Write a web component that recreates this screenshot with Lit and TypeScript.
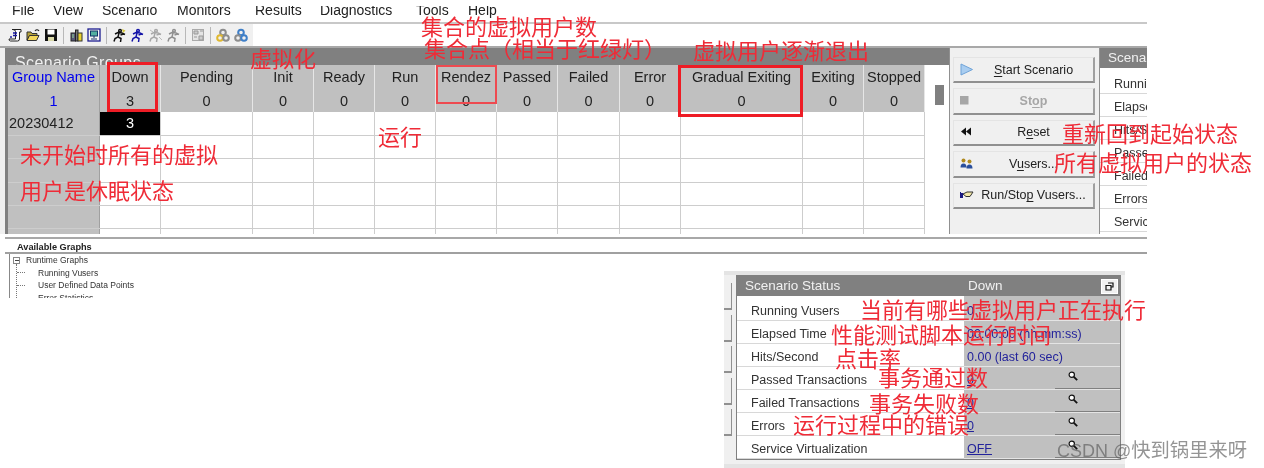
import { LitElement, html, css, svg } from "lit";
import { customElement } from "lit/decorators.js";

const MENUS = [["File",12],["View",53],["Scenario",102],["Monitors",177],["Results",255],["Diagnostics",320],["Tools",416],["Help",468]] as const;
const COLS = [
  ["Down", 61, "3"],["Pending", 92, "0"],["Init", 61, "0"],["Ready", 61, "0"],["Run", 61, "0"],["Rendez", 61, "0"],
  ["Passed", 61, "0"],["Failed", 62, "0"],["Error", 61, "0"],["Gradual Exiting", 122, "0"],["Exiting", 61, "0"],["Stopped", 61, "0"],
] as const;
const ROW_H = [24, 23, 24, 23, 23];

const runner = (c: string) => svg`<path d="M8 1.5a1.3 1.3 0 1 1 0 2.6a1.3 1.3 0 0 1 0-2.6zM3 6l3-1.5 4 .5 3 1.5M7 5l-1 4-3 1.5-1 3M6 9l3 1.5-.5 3.5M8.5 7l3-1" fill="none" stroke="${c}" stroke-width="1.5"/>`;

const ICONS = [
  svg`<path d="M4 1.5h9v2.5h-1.5v7q0 2-2 2H2.5q-1.5 0-1.5-2h6.5V3.5q0-2-3-2z" fill="#fff" stroke="#222"/><path d="M5 5h4M5 7.5h4M3 8v2" stroke="#1515a0" stroke-width="1.4"/>`,
  svg`<path d="M1 4h4l1 1.5h5v2H3.5L1 12z" fill="#b5a23c" stroke="#333"/><path d="M3.5 7.5H13l-2.5 5H1z" fill="#f3d75a" stroke="#333"/><path d="M9 3q2-2.5 4 0" fill="none" stroke="#222" stroke-width="1.2"/>`,
  svg`<rect x="1" y="1" width="12" height="12" fill="#111"/><rect x="3.5" y="1.5" width="7" height="5" fill="#fff"/><rect x="4" y="9" width="6" height="4" fill="#d8d8a8"/>`,
  svg`<rect x="2" y="5" width="4.5" height="8" fill="#557" stroke="#222"/><rect x="6.5" y="2" width="2.5" height="11" fill="#777" stroke="#222"/><rect x="9" y="5" width="4" height="8" fill="#ead22e" stroke="#333"/><path d="M3 7h2M3 9h2" stroke="#9d9"/>`,
  svg`<rect x="1" y="1" width="12" height="12" fill="#f5f5f5" stroke="#1c1c90" stroke-width="1.3"/><rect x="3.5" y="3" width="7" height="5" fill="#52b0a0" stroke="#136"/><path d="M7 8v2M4 11h6" stroke="#136"/>`,
  svg`${runner("#111")}<path d="M10 1l3.5 1.5L11 5z" fill="#d8c838"/>`,
  runner("#1616a8"),
  svg`${runner("#a8a8a8")}<path d="M2 2l3 2M11 9l3 3" stroke="#bbb"/>`,
  runner("#909090"),
  svg`<rect x="1.5" y="1.5" width="11" height="11" fill="#e4e4e4" stroke="#aaa"/><path d="M3 3h4v3H3zM8 8h4v4H8z" fill="#ccc" stroke="#999"/><path d="M9 3h3M3 9h3" stroke="#999"/>`,
  svg`<g fill="none" stroke-width="2"><circle cx="7" cy="4.5" r="2.8" stroke="#8d8d8d"/><circle cx="4" cy="10" r="2.8" stroke="#e0b830"/><circle cx="10" cy="10" r="2.8" stroke="#8d8d8d"/></g>`,
  svg`<g fill="none" stroke-width="2"><circle cx="7" cy="4.5" r="2.8" stroke="#3f7fc8"/><circle cx="4" cy="10" r="2.8" stroke="#8d8d8d"/><circle cx="10" cy="10" r="2.8" stroke="#3f7fc8"/></g>`,
];
const GROUPS = [[0,1,2],[3,4],[5,6,7,8],[9],[10,11]];

const BTN_ICONS = [
  svg`<path d="M1 1L12.5 6.5 1 12z" fill="#a9cdf0" stroke="#6fa3d8"/>`,
  svg`<rect x="0" y="2" width="8.5" height="8.5" fill="#a6a6a6"/>`,
  svg`<path d="M6 2.5v8L1 6.5zM11 2.5v8L6 6.5z" fill="#111"/>`,
  svg`<circle cx="3.5" cy="3.5" r="2" fill="#b08a20"/><circle cx="9.5" cy="4.5" r="2" fill="#b08a20"/><path d="M.5 10.5q0-4 3-4t3 4zM6.5 11.5q0-4 3-4t3 4z" fill="#2a4f9c"/>`,
  svg`<path d="M0 4v6M2 5v5" stroke="#1a1a80" stroke-width="2"/><path d="M3 6l4-2h6l-3 4.5H6z" fill="#f3e9a8" stroke="#333"/>`,
];
const LABELS = [
  ["Start Scenario",0,"S"],["Stop",2,"o"],["Reset",1,"e"],["Vusers...",1,"u"],["Run/Stop Vusers...",7,"p"],
] as const;

const STATUS: [string,string,string][] = [
  ["Running Vusers","0","plain"],["Elapsed Time","00:00:00 (hh:mm:ss)","plain"],["Hits/Second","0.00 (last 60 sec)","plain"],
  ["Passed Transactions","0","link"],["Failed Transactions","0","link"],["Errors","0","link"],["Service Virtualization","OFF","link"],
];

const NOTES: [string, number, number][] = [
  ["集合的虚拟用户数",421,25],["集合点（相当于红绿灯）",424,47],["虚拟化",250,57],["虚拟用户逐渐退出",693,49],
  ["未开始时所有的虚拟",20,153],["用户是休眠状态",20,189],["运行",378,135],
  ["重新回到起始状态",1062,132],["所有虚拟用户的状态",1054,161],
  ["当前有哪些虚拟用户正在执行",860,308],["性能测试脚本运行时间",831,333],["点击率",835,357],
  ["事务通过数",878,376],["事务失败数",869,402],["运行过程中的错误",793,423],
];

const lens = svg`<svg class="lens" width="10" height="10" viewBox="0 0 12 12"><circle cx="4.5" cy="4.5" r="3.2" fill="#fff" stroke="#111" stroke-width="1.4"/><path d="M7 7l4 4" stroke="#111" stroke-width="2.2"/></svg>`;

@customElement("app-root")
export class AppRoot extends LitElement {
  static styles = css`
    :host { display: block; position: relative; width: 1264px; height: 468px; overflow: hidden; background: #fff;
      font-family: "Liberation Sans", "DejaVu Sans", sans-serif; color: #222; filter: blur(.3px); }
    .top { width: 1147px; height: 298px; overflow: hidden; display: flex; flex-direction: column; }
    .menu { border-bottom: 2px solid #c8c8c8; flex: none; padding-top: 6px; height: 16px; }
    .menu-in { position: relative; height: 16px; overflow: hidden; }
    .menu-in span { position: absolute; top: -6px; font-size: 14px; line-height: 20px; }
    .toolbar { height: 22px; flex: none; display: flex; align-items: center; background: linear-gradient(#f0f0f0,#f0f0f0) no-repeat left / 253px 100%; padding-left: 8px; }
    .tgroup { display: flex; gap: 4px; align-items: center; padding-right: 5px; margin-right: 5px; border-right: 1px solid #b8b8b8; height: 17px; }
    .tgroup:last-child { border-right: 0; }
    .main { height: 186px; flex: none; display: flex; border-top: 2px solid #a8a8a8; background: #f0f0f0; padding-left: 5px; }
    .groups { width: 944px; box-sizing: border-box; border-left: 3px solid #808080; flex: none; display: flex; flex-direction: column; background: #fff; }
    .title { height: 17px; flex: none; background: #808080; color: #f0f0f0; font-size: 16px; line-height: 29px; padding-left: 7px; overflow: hidden; letter-spacing: .4px; }
    .sheet { display: flex; flex: 1; min-height: 0; }
    .grid { display: flex; flex-direction: column; flex: none; width: 917px; }
    .row { display: flex; box-sizing: border-box; border-bottom: 1px solid #cdcdcd; flex: none; }
    .fill { flex: 1; display: flex; }
    .cell { box-sizing: border-box; border-right: 1px solid #cdcdcd; flex: none; font-size: 14px; }
    .name { width: 92px; background: #c0c0c0; border-right: 1px solid #a0a0a0; }
    .heads { display: flex; height: 47px; flex: none; }
    .head { background: #c0c0c0; border-right: 1px solid #e6e6e6; box-sizing: border-box; text-align: center; font-size: 14.5px; display: flex; flex-direction: column; flex: none; color: #222; padding-top: 4px; }
    .head b { font-weight: 400; line-height: 17px; height: 17px; white-space: nowrap; }
    .head i { font-style: normal; line-height: 17px; margin-top: 7px; font-size: 14.5px; }
    .head.blue { color: #0000ee; border-right-color: #a0a0a0; }
    .val { font-size: 14.5px; line-height: 22px; padding-left: 1px; }
    .black { background: #000; color: #fff; text-align: center; font-size: 14.5px; line-height: 22px; }
    .scroll { width: 24px; flex: none; background: #fff; position: relative; }
    .thumb { position: absolute; left: 10px; top: 20px; width: 9px; height: 20px; background: #808080; }
    .buttons { width: 150px; flex: none; display: flex; flex-direction: column; gap: 5px; padding: 9px 4px 0 3px; box-sizing: border-box; background: #f0f0f0; border-left: 1px solid #909090; }
    .btn { height: 26.4px; flex: none; display: flex; align-items: center; box-sizing: border-box; background: #f0f0f0; border: 1px solid #e4e4e4; border-right: 2px solid #a0a0a0; border-bottom: 2px solid #909090; font-size: 12.5px; color: #222; padding-left: 6px; }
    .btn svg { flex: none; }
    .btn span { flex: 1; text-align: center; white-space: nowrap; }
    .btn span u { text-underline-offset: 2px; }
    .btn.off { color: #a6a6a6; font-weight: 700; }
    .peek { flex: 1; min-width: 0; overflow: hidden; display: flex; flex-direction: column; background: #fff; border-left: 1px solid #909090; }
    .peek-h { height: 20px; background: #808080; color: #f0f0f0; font-size: 13.5px; line-height: 20px; padding-left: 8px; white-space: nowrap; flex: none; }
    .peek-b { padding-top: 3px; }
    .peek-r { height: 23px; padding-left: 14px; font-size: 12.5px; line-height: 26px; white-space: nowrap; border-bottom: 1px solid #d8d8d8; color: #333; box-sizing: border-box; }
    .graphs { height: 62px; flex: none; border-top: 2px solid #a8a8a8; margin-top: 3px; margin-left: 5px; background: #fff; display: flex; flex-direction: column; }
    .gt { height: 13px; flex: none; font-size: 9.2px; font-weight: 700; padding-left: 12px; line-height: 16px; border-bottom: 2px solid #a0a0a0; }
    .tree { margin-left: 4px; border-left: 1px solid #888; padding: 0 0 0 3px; font-size: 8.5px; line-height: 12.6px; color: #333; position: relative; flex: 1; }
    .tree::before { content: ""; position: absolute; left: 6px; top: 10px; bottom: 0; border-left: 1px dotted #777; }
    .tree div { white-space: nowrap; }
    .minus { display: inline-block; vertical-align: middle; box-sizing: border-box; width: 7px; height: 7px; border: 1px solid #888; margin-right: 6px; background: linear-gradient(#444,#444) no-repeat center / 4px 1px; }
    .sub { padding-left: 4px; display: flex; align-items: center; }
    .sub::before { content: ""; width: 8px; border-top: 1px dotted #777; flex: none; }
    .subt { padding-left: 13px; }
    .lower { position: absolute; left: 724px; top: 271px; width: 401px; height: 197px; background: #f0f0f0; border-top: 4px solid #e4e4e4; border-bottom: 4px solid #e4e4e4; box-sizing: border-box; display: flex; }
    .stubs { width: 12px; flex: none; display: flex; flex-direction: column; gap: 4.5px; padding-top: 8px; }
    .stubs div { width: 8px; height: 27px; border-right: 1px solid #909090; border-bottom: 2px solid #909090; box-sizing: border-box; }
    .status { width: 385px; height: 185px; flex: none; box-sizing: border-box; border: 1px solid #808080; background: #fff; display: flex; flex-direction: column; }
    .status-h { height: 20px; flex: none; background: #808080; color: #f0f0f0; font-size: 13.5px; line-height: 20px; display: flex; padding: 0 2px 0 8px; }
    .status-h span:first-child { width: 223px; }
    .status-h span:nth-child(2) { flex: 1; }
    .restore { width: 17px; height: 15px; align-self: center; background: #f0f0f0; border: 1px solid #fff; box-sizing: border-box; display: flex; align-items: center; justify-content: center; }
    .sr { display: flex; height: 23px; flex: none; box-sizing: border-box; border-bottom: 1px solid #d8d8d8; }
    .sr.first { height: 25px; }
    .sr .k { width: 227px; padding-left: 14px; box-sizing: border-box; font-size: 12.5px; line-height: 26px; height: 22px; color: #333; white-space: nowrap; }
    .sr .v { flex: 1; background: #c0c0c0; font-size: 12.5px; line-height: 26px; color: #23239b; padding-left: 3px; position: relative; white-space: nowrap; border-bottom: 1px solid #e4e4e4; margin-bottom: -1px; }
    .sr.first .k, .sr.first .v { padding-top: 2px; }
    .sr .link { text-decoration: underline; }
    .lens { position: absolute; right: 42px; top: 4px; }
    .v .btnline { position: absolute; left: 91px; right: 0; bottom: 0; border-bottom: 1px solid #808080; }
    .note { position: absolute; color: #ef2b37; font-family: "Noto Sans CJK SC", sans-serif; font-size: 22px; line-height: 28px; white-space: nowrap; transform: translateY(-14px); }
    .box { position: absolute; border: 3px solid #ee1c25; box-sizing: border-box; }
    .box.thin { border: 2px solid #ee4a50; }
    .mark { position: absolute; left: 1057px; top: 436px; font-family: "Noto Sans CJK SC", sans-serif; font-size: 19.3px; line-height: 26px; color: rgba(90,90,90,.65); white-space: nowrap; }
    .mark span { font-family: "Liberation Sans", sans-serif; font-size: 18px; }
  `;

  render() {
    return html`
      <div class="top">
        <div class="menu"><div class="menu-in">${MENUS.map(([t, x]) => html`<span style="left:${x}px">${t}</span>`)}</div></div>
        <div class="toolbar">
          ${GROUPS.map(g => html`<div class="tgroup">${g.map(i => html`<svg width="14" height="14" viewBox="0 0 14 14">${ICONS[i]}</svg>`)}</div>`)}
        </div>
        <div class="main">
          <div class="groups">
            <div class="title">Scenario Groups</div>
            <div class="sheet">
              <div class="grid">
                <div class="heads">
                  <div class="head blue" style="width:92px"><b>Group Name</b><i>1</i></div>
                  ${COLS.map(([t, w, v]) => html`<div class="head" style="width:${w}px"><b>${t}</b><i>${v}</i></div>`)}
                </div>
                ${ROW_H.map((h, r) => html`<div class="row" style="height:${h}px">
                  <div class="cell name ${r === 0 ? "val" : ""}">${r === 0 ? "20230412" : ""}</div>
                  ${COLS.map(([, w], c) => html`<div class="cell ${r === 0 && c === 0 ? "black" : ""}" style="width:${w}px">${r === 0 && c === 0 ? "3" : ""}</div>`)}
                </div>`)}
                <div class="fill">
                  <div class="cell name"></div>
                  ${COLS.map(([, w]) => html`<div class="cell" style="width:${w}px"></div>`)}
                </div>
              </div>
              <div class="scroll"><div class="thumb"></div></div>
            </div>
          </div>
          <div class="buttons">
            ${LABELS.map(([t, idx, ch], i) => html`<div class="btn ${i === 1 ? "off" : ""}">
              <svg width="14" height="14" viewBox="0 0 14 14">${BTN_ICONS[i]}</svg>
              <span>${t.slice(0, idx)}<u>${ch}</u>${t.slice(idx + 1)}</span>
            </div>`)}
          </div>
          <div class="peek">
            <div class="peek-h">Scenario Status</div>
            <div class="peek-b">${STATUS.map(([k]) => html`<div class="peek-r">${k}</div>`)}</div>
          </div>
        </div>
        <div class="graphs">
          <div class="gt">Available Graphs</div>
          <div class="tree">
            <div><span class="minus"></span>Runtime Graphs</div>
            <div class="sub"><span class="subt"></span>Running Vusers</div>
            <div class="sub"><span class="subt"></span>User Defined Data Points</div>
            <div class="sub"><span class="subt"></span>Error Statistics</div>
          </div>
        </div>
      </div>

      <div class="lower">
        <div class="stubs">${[0,1,2,3,4].map(() => html`<div></div>`)}</div>
        <div class="status">
          <div class="status-h"><span>Scenario Status</span><span>Down</span>
            <span class="restore"><svg width="9" height="9" viewBox="0 0 9 9"><path d="M3 1h5v4H6M1 3.5h5v4.5H1z" fill="none" stroke="#111" stroke-width="1.2"/></svg></span>
          </div>
          ${STATUS.map(([k, v, kind], i) => html`<div class="sr ${i === 0 ? "first" : ""}"><div class="k">${k}</div>
            <div class="v"><span class="${kind}">${v}</span>${i >= 3 ? html`${lens}<span class="btnline"></span>` : ""}</div></div>`)}
        </div>
      </div>

      <div class="box" style="left:107px;top:62px;width:51px;height:50px"></div>
      <div class="box thin" style="left:436px;top:65px;width:61px;height:39px"></div>
      <div class="box" style="left:678px;top:65px;width:125px;height:52px"></div>
      ${NOTES.map(([t, x, y]) => html`<div class="note" style="left:${x}px;top:${y}px">${t}</div>`)}
      <div class="mark"><span>CSDN @</span>快到锅里来呀</div>
    `;
  }
}
